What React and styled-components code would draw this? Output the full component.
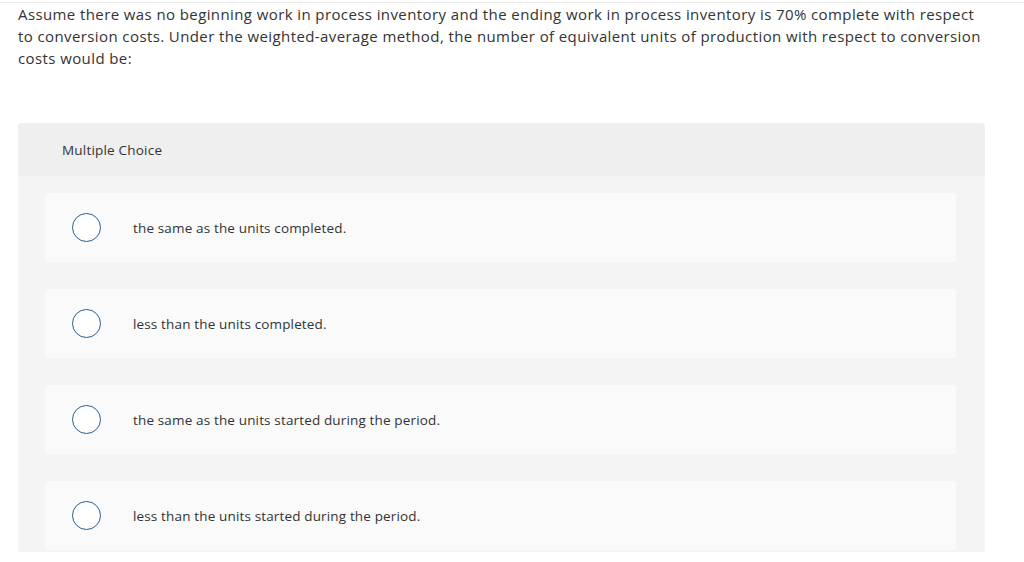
import styled, { createGlobalStyle } from "styled-components";

const GlobalStyle = createGlobalStyle`
    body {
        margin: 0;
        background: #ffffff;
        font-family: "Open Sans", "Liberation Sans", sans-serif;
        color: #333333;
    }
`;

const lineas = [
    "Assume there was no beginning work in process inventory and the ending work in process inventory is 70% complete with respect",
    "to conversion costs. Under the weighted-average method, the number of equivalent units of production with respect to conversion",
    "costs would be:",
];

const opciones = [
    "the same as the units completed.",
    "less than the units completed.",
    "the same as the units started during the period.",
    "less than the units started during the period.",
];

const App = () => {
    return (
        <>
            <GlobalStyle />
            <Pagina>
                <Pregunta>
                    {lineas.map((linea) => (
                        <Linea key={linea}>{linea}</Linea>
                    ))}
                </Pregunta>
                <Panel>
                    <Cabecera>Multiple Choice</Cabecera>
                    <Lista>
                        {opciones.map((texto) => (
                            <Opcion key={texto}>
                                <Radio />
                                <TextoOpcion>{texto}</TextoOpcion>
                            </Opcion>
                        ))}
                    </Lista>
                </Panel>
            </Pagina>
        </>
    );
}

const Pagina = styled.div`
    border-top: 1px solid #ececec;
    margin-top: 2px;
    padding: 0 39px 0 18px;
`;

const Pregunta = styled.p`
    margin: 0;
    font-size: 15px;
    line-height: 22px;
    letter-spacing: 0.4px;
    color: #333333;
`;

const Linea = styled.span`
    display: block;
    white-space: nowrap;
`;

const Panel = styled.div`
    margin-top: 54px;
    background: #f4f4f4;
    border-radius: 4px 4px 0 0;
    padding-bottom: 2px;
`;

const Cabecera = styled.div`
    display: flex;
    align-items: center;
    height: 53px;
    padding-left: 44px;
    background: #efefef;
    border-radius: 4px 4px 0 0;
    font-size: 13.5px;
    letter-spacing: 0.2px;
    color: #333333;
`;

const Lista = styled.div`
    display: flex;
    flex-direction: column;
    gap: 27px;
    padding: 17px 29px 0 27px;
`;

const Opcion = styled.div`
    display: flex;
    align-items: center;
    height: 69px;
    padding-left: 27px;
    background: #fafafa;
    border-radius: 4px;
`;

const Radio = styled.span`
    box-sizing: border-box;
    width: 29px;
    height: 29px;
    border: 1.5px solid #2a5c8f;
    border-radius: 50%;
    background: #ffffff;
    flex-shrink: 0;
`;

const TextoOpcion = styled.span`
    margin-left: 32px;
    font-size: 13.5px;
    letter-spacing: 0.15px;
    color: #333333;
`;

export default App;
